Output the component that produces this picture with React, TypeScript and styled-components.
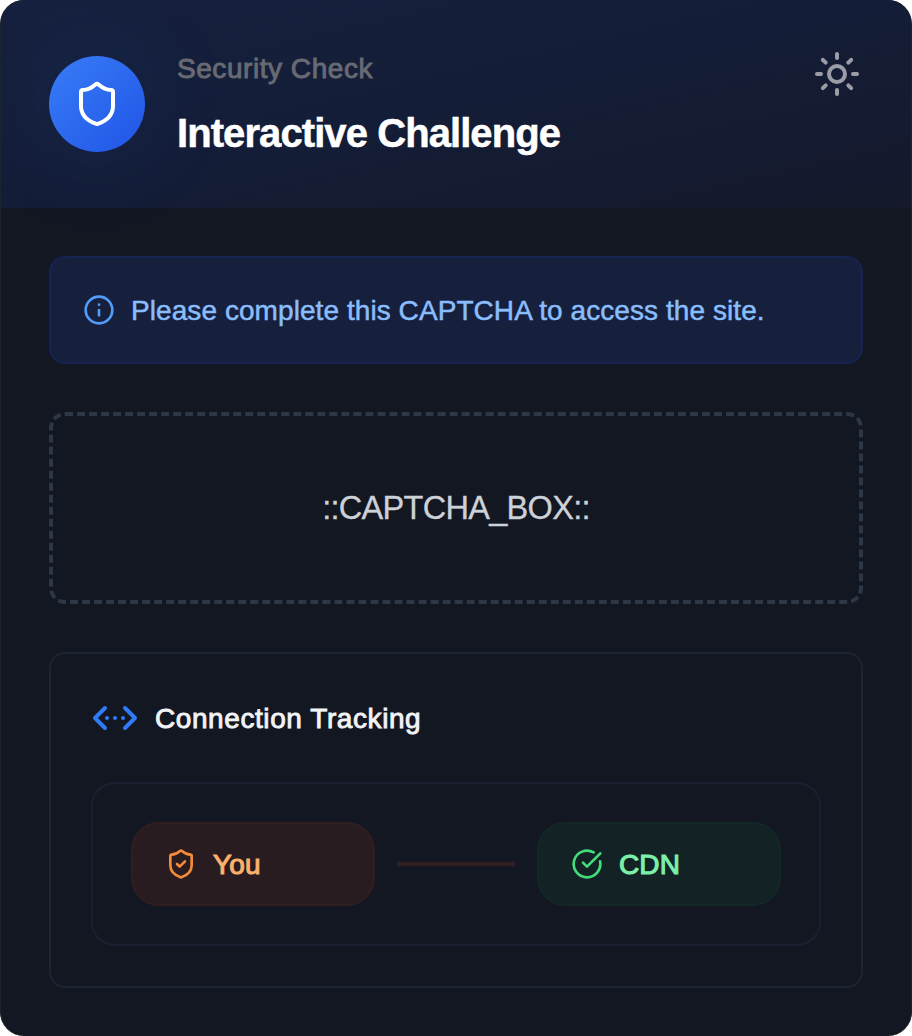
import React from "react";
import styled, { createGlobalStyle } from "styled-components";
import {
  ChevronsLeftRightEllipsis,
  CircleCheckBig,
  Info,
  Shield,
  ShieldCheck,
  Sun,
} from "lucide-react";

const GlobalStyle = createGlobalStyle`
  *, *::before, *::after { box-sizing: border-box; }
  body {
    margin: 0;
    background: #ffffff;
    font-family: "Liberation Sans", Arial, sans-serif;
  }
  svg { display: block; flex-shrink: 0; }
`;

const Card = styled.main`
  width: 912px;
  height: 1036px;
  border: 1px solid #1c2430;
  border-top: 0;
  border-bottom: 0;
  border-radius: 24px;
  background: #131722;
  overflow: hidden;
`;

const Header = styled.header`
  display: flex;
  align-items: flex-start;
  height: 208px;
  padding: 56px 48px 0;
  background: linear-gradient(to bottom right, #16213e 0%, #141d37 50%, #15192b 100%);
`;

const Badge = styled.div`
  display: flex;
  align-items: center;
  justify-content: center;
  width: 96px;
  height: 96px;
  border-radius: 50%;
  color: #ffffff;
  background: linear-gradient(135deg, #387cf7, #2055e6);
  box-shadow: 0 0 100px rgba(37, 99, 235, 0.14);
`;

const Heading = styled.div`
  flex: 1;
  margin: -7px 0 0 32px;
`;

const Eyebrow = styled.p`
  margin: 0;
  font-size: 28px;
  line-height: 40px;
  letter-spacing: 0.55px;
  color: #686a73;
  -webkit-text-stroke: 0.9px currentColor;
`;

const Title = styled.h1`
  margin: 19px 0 0;
  font-size: 40px;
  line-height: 50px;
  font-weight: 700;
  letter-spacing: -0.92px;
  color: #ffffff;
  -webkit-text-stroke: 0.5px currentColor;
`;

const ThemeButton = styled.button`
  margin: -6px 2px 0 0;
  padding: 0;
  border: 0;
  background: none;
  color: #9b9ca5;
`;

const Body = styled.div`
  display: flex;
  flex-direction: column;
  gap: 48px;
  padding: 48px;
`;

const Notice = styled.div`
  display: flex;
  align-items: center;
  gap: 16px;
  height: 108px;
  padding: 0 32px;
  border: 2px solid #172352;
  border-radius: 16px;
  background: #16203d;
  color: #519bf9;
`;

const NoticeText = styled.p`
  margin: 0;
  padding-top: 2px;
  font-size: 28px;
  line-height: 40px;
  letter-spacing: 0.07px;
  white-space: nowrap;
  color: #8abdfc;
  -webkit-text-stroke: 0.5px currentColor;
`;

const CaptchaBox = styled.div`
  display: flex;
  align-items: center;
  justify-content: center;
  height: 192px;
  border: 4px dashed #2d3746;
  border-radius: 16px;
  font-size: 32.5px;
  line-height: 48px;
  letter-spacing: -0.7px;
  color: #cdd1d8;
  -webkit-text-stroke: 0.3px currentColor;
`;

const Panel = styled.section`
  height: 336px;
  padding: 40px;
  border: 2px solid #1d2530;
  border-radius: 16px;
`;

const PanelTitle = styled.h2`
  display: flex;
  align-items: center;
  gap: 16px;
  margin: 0 0 40px;
  height: 48px;
  font-size: 28px;
  font-weight: 400;
  letter-spacing: 0.58px;
  color: #f2f3f5;
  -webkit-text-stroke: 0.9px currentColor;

  svg {
    color: #2f7af7;
    -webkit-text-stroke: 0;
  }

  span {
    padding-top: 2px;
  }
`;

const Route = styled.div`
  display: flex;
  align-items: center;
  justify-content: space-between;
  height: 164px;
  padding: 0 38px;
  border: 2px solid #1b2030;
  border-radius: 24px;
`;

const tones = {
  orange: { bg: "#281c21", border: "#311e21", icon: "#f68a38", text: "#fbb16b" },
  green: { bg: "#132225", border: "#132725", icon: "#42dc7b", text: "#7bf0a8" },
};

const Node = styled.div<{ $tone: keyof typeof tones }>`
  display: flex;
  align-items: center;
  gap: 16px;
  width: 244px;
  height: 84px;
  padding: 0 32px;
  border: 2px solid ${(p) => tones[p.$tone].border};
  border-radius: 28px;
  background: ${(p) => tones[p.$tone].bg};
  color: ${(p) => tones[p.$tone].icon};
`;

const NodeLabel = styled.span<{ $tone: keyof typeof tones }>`
  padding-top: 2px;
  font-size: 28px;
  line-height: 40px;
  letter-spacing: 0.1px;
  color: ${(p) => tones[p.$tone].text};
  -webkit-text-stroke: 1.1px currentColor;
`;

const Link = styled.div`
  width: 118px;
  height: 4px;
  background: #311e20;
`;

export default function App() {
  return (
    <>
      <GlobalStyle />
      <Card>
        <Header>
          <Badge>
            <Shield size={48} />
          </Badge>
          <Heading>
            <Eyebrow>Security Check</Eyebrow>
            <Title>Interactive Challenge</Title>
          </Heading>
          <ThemeButton aria-label="Toggle theme">
            <Sun size={48} />
          </ThemeButton>
        </Header>
        <Body>
          <Notice>
            <Info size={32} />
            <NoticeText>Please complete this CAPTCHA to access the site.</NoticeText>
          </Notice>
          <CaptchaBox>::CAPTCHA_BOX::</CaptchaBox>
          <Panel>
            <PanelTitle>
              <ChevronsLeftRightEllipsis size={48} />
              <span>Connection Tracking</span>
            </PanelTitle>
            <Route>
              <Node $tone="orange">
                <ShieldCheck size={32} />
                <NodeLabel $tone="orange">You</NodeLabel>
              </Node>
              <Link />
              <Node $tone="green">
                <CircleCheckBig size={32} />
                <NodeLabel $tone="green">CDN</NodeLabel>
              </Node>
            </Route>
          </Panel>
        </Body>
      </Card>
    </>
  );
}
